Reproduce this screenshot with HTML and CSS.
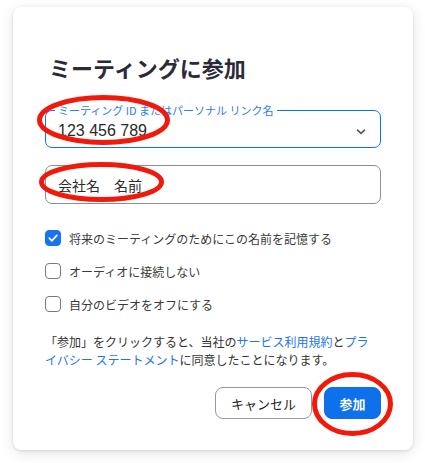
FILE: index.html
```html
<!DOCTYPE html>
<html lang="ja">
<head>
<meta charset="utf-8">
<link rel="stylesheet" href="styles.css">
</head>
<body>
<div class="card">
  <h1 class="title">ミーティングに参加</h1>
  <div class="field field-active">
    <span class="field-label">ミーティング ID またはパーソナル リンク名</span>
    <span class="field-value">123 456 789</span>
    <svg class="chevron" width="10" height="6" viewBox="0 0 10 6"><path d="M1.5 1.2 L5 4.4 L8.5 1.2" fill="none" stroke="#555" stroke-width="1.6" stroke-linecap="round" stroke-linejoin="round"/></svg>
  </div>
  <div class="field">
    <span class="field-value field-value-jp">会社名　名前</span>
  </div>
  <div class="checks">
    <label class="check-row"><span class="box box-on"><svg width="16" height="16" viewBox="0 0 16 16"><path d="M4.3 8.2 L7 10.8 L11.8 5.4" fill="none" stroke="#fff" stroke-width="1.7" stroke-linecap="round" stroke-linejoin="round"/></svg></span><span class="check-text">将来のミーティングのためにこの名前を記憶する</span></label>
    <label class="check-row"><span class="box"></span><span class="check-text">オーディオに接続しない</span></label>
    <label class="check-row"><span class="box"></span><span class="check-text">自分のビデオをオフにする</span></label>
  </div>
  <p class="terms">「参加」をクリックすると、当社の<a class="link">サービス利用規約</a>と<a class="link">プライバシー ステートメント</a>に同意したことになります。</p>
  <div class="actions">
    <button class="btn btn-cancel">キャンセル</button>
    <button class="btn btn-join">参加</button>
  </div>
</div>
<svg class="marks" width="425" height="463" viewBox="0 0 425 463">
  <ellipse cx="103.5" cy="120" rx="64" ry="22.5" fill="none" stroke="#f01a0c" stroke-width="5"/>
  <ellipse cx="101.5" cy="182" rx="60" ry="17.5" fill="none" stroke="#f01a0c" stroke-width="5"/>
  <ellipse cx="352.5" cy="404" rx="38" ry="29.5" fill="none" stroke="#f01a0c" stroke-width="5"/>
</svg>
</body>
</html>
```
FILE: styles.css
```css
html, body {
  margin: 0;
  padding: 0;
  background: #ffffff;
}
body {
  width: 425px;
  height: 463px;
  position: relative;
  overflow: hidden;
  font-family: "Noto Sans CJK JP", "Liberation Sans", sans-serif;
  color: #232333;
}
.card {
  margin: 7px 0 0 13px;
  width: 400px;
  height: 443px;
  box-sizing: border-box;
  padding: 0 32px;
  background: #fff;
  border-radius: 8px;
  box-shadow: 0 1px 3px rgba(0,0,0,0.12), 0 3px 14px rgba(0,0,0,0.10);
  display: flex;
  flex-direction: column;
}
.title {
  margin: 45px 0 0 4px;
  font-size: 22px;
  line-height: 30px;
  font-weight: 700;
  color: #2b2b38;
}
.field {
  position: relative;
  margin-top: 17px;
  height: 39px;
  box-sizing: border-box;
  border: 1px solid #8e8e92;
  border-radius: 7px;
  display: flex;
  align-items: center;
  padding: 0 12px;
}
.field-active {
  margin-top: 28px;
  height: 38px;
  border-color: #0e72ed;
  padding-top: 4px;
}
.field-label {
  position: absolute;
  top: -8px;
  left: 9px;
  padding: 0 3px;
  background: #fff;
  font-size: 11px;
  line-height: 14px;
  color: #2d7cf0;
}
.field-value {
  font-family: "Liberation Sans", "Noto Sans CJK JP", sans-serif;
  font-size: 16px;
  color: #2a2a2a;
  flex: 1;
}
.field-value-jp {
  font-family: "Noto Sans CJK JP", sans-serif;
  font-size: 14px;
}
.chevron {
  margin-right: 2px;
  margin-top: 2px;
}
.checks {
  margin-top: 26px;
  display: flex;
  flex-direction: column;
  gap: 17px;
}
.check-row {
  display: flex;
  align-items: center;
  height: 16px;
}
.box {
  width: 16px;
  height: 16px;
  box-sizing: border-box;
  border: 1px solid #7a7a7e;
  border-radius: 4px;
  flex: none;
  display: flex;
}
.box-on {
  background: #1a72ee;
  border-color: #1a72ee;
}
.box-on svg {
  margin: -1px;
}
.check-text {
  margin-left: 8px;
  font-size: 12px;
  color: #3a3a3a;
}
.terms {
  margin: 21px 6px 0 0;
  font-size: 12px;
  line-height: 18px;
  color: #333;
}
.link {
  color: #1e73e8;
  text-decoration: none;
}
.actions {
  margin-top: 18px;
  display: flex;
  justify-content: flex-end;
  gap: 12px;
}
.btn {
  font-family: "Noto Sans CJK JP", "Liberation Sans", sans-serif;
  font-size: 13px;
  height: 32px;
  border-radius: 8px;
  box-sizing: border-box;
  padding: 0;
  cursor: pointer;
}
.btn-cancel {
  width: 97px;
  background: #fff;
  border: 1px solid #98989c;
  color: #232323;
}
.btn-join {
  width: 57px;
  background: #0e71eb;
  border: 1px solid #0e71eb;
  color: #fff;
  font-weight: 700;
}
.marks {
  position: absolute;
  left: 0;
  top: 0;
  pointer-events: none;
}
```
